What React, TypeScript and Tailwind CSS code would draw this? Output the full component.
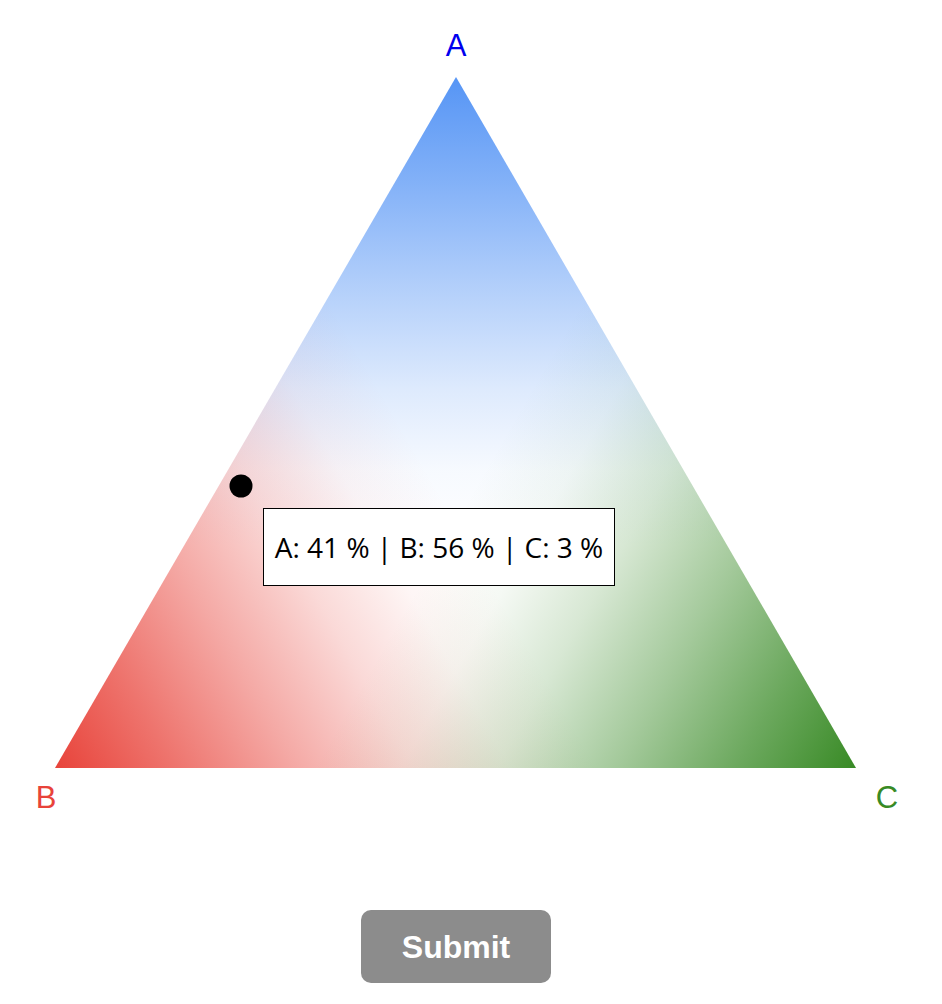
import React from 'react';

const fade = (color: string) => (
    <>
        <stop offset="0" stopColor={color} stopOpacity={1} />
        <stop offset="0.15" stopColor={color} stopOpacity={0.74} />
        <stop offset="0.3" stopColor={color} stopOpacity={0.46} />
        <stop offset="0.45" stopColor={color} stopOpacity={0.2} />
        <stop offset="0.57" stopColor={color} stopOpacity={0.05} />
        <stop offset="0.68" stopColor={color} stopOpacity={0} />
    </>
);

const TernaryPlot = () => (
    <svg width={912} height={850} className="block">
        <defs>
            <linearGradient id="gA" gradientUnits="userSpaceOnUse" x1={456} y1={77} x2={456} y2={768}>
                {fade('#5695f5')}
            </linearGradient>
            <linearGradient id="gB" gradientUnits="userSpaceOnUse" x1={55} y1={768} x2={656} y2={422}>
                {fade('#e8433a')}
            </linearGradient>
            <linearGradient id="gC" gradientUnits="userSpaceOnUse" x1={856} y1={768} x2={255} y2={422}>
                {fade('#388a25')}
            </linearGradient>
        </defs>
        <polygon points="456,77 55,768 856,768" fill="#ffffff" />
        <polygon points="456,77 55,768 856,768" fill="url(#gA)" />
        <polygon points="456,77 55,768 856,768" fill="url(#gB)" />
        <polygon points="456,77 55,768 856,768" fill="url(#gC)" />
        <text x={456} y={56} textAnchor="middle" fontSize={31} fill="#0000ee" fontFamily="Liberation Sans, Arial, sans-serif">A</text>
        <text x={46} y={808} textAnchor="middle" fontSize={31} fill="#e8433a" fontFamily="Liberation Sans, Arial, sans-serif">B</text>
        <text x={887} y={808} textAnchor="middle" fontSize={31} fill="#388a25" fontFamily="Liberation Sans, Arial, sans-serif">C</text>
        <circle cx={241} cy={486} r={11.5} fill="#000000" />
    </svg>
);

export default function App() {
    return (
        <div className="w-[912px] flex flex-col items-center bg-white">
            <div className="relative">
                <TernaryPlot />
                <div className="absolute left-[263px] top-[508px] w-[352px] h-[78px] border border-black bg-white flex items-center justify-center font-['Open_Sans',sans-serif] text-[28px] text-black">
                    A: 41 % | B: 56 % | C: 3 %
                </div>
            </div>
            <button className="mt-[60px] w-[190px] h-[73px] rounded-[10px] bg-[#8c8c8c] text-white font-bold text-[32px] font-['Liberation_Sans',Arial,sans-serif]">
                Submit
            </button>
        </div>
    );
}
